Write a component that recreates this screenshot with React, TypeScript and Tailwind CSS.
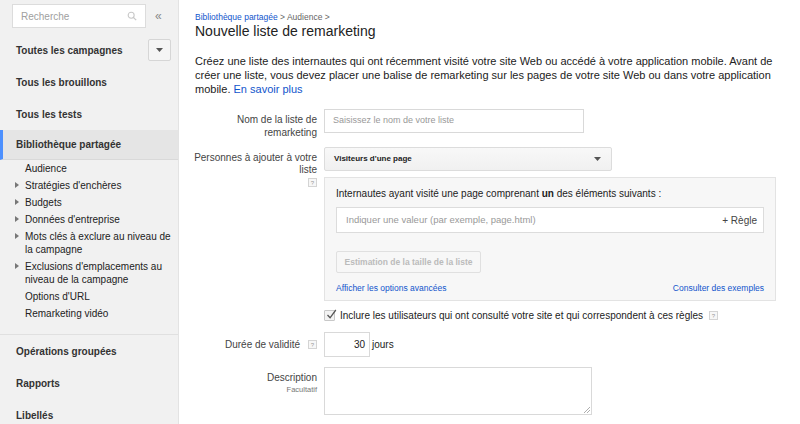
import React from "react";

const font = { fontFamily: '"Liberation Sans", Arial, sans-serif' };

const Help = () => (
  <span className="inline-flex h-[9px] w-[9px] items-center justify-center border border-[#d4d4d4] bg-[#f7f7f7] text-[6px] leading-none text-[#999]">
    ?
  </span>
);

const Caret = () => (
  <svg width="7" height="4" viewBox="0 0 7 4">
    <path d="M0 0h7L3.5 4z" fill="#555" />
  </svg>
);

const SubArrow = () => (
  <svg width="4" height="6" viewBox="0 0 4 6" className="mt-[3px] shrink-0">
    <path d="M0 0l4 3-4 3z" fill="#777" />
  </svg>
);

const Sidebar = () => {
  const subItems: { label: string; arrow: boolean }[] = [
    { label: "Audience", arrow: false },
    { label: "Stratégies d'enchères", arrow: true },
    { label: "Budgets", arrow: true },
    { label: "Données d'entreprise", arrow: true },
    { label: "Mots clés à exclure au niveau de la campagne", arrow: true },
    { label: "Exclusions d'emplacements au niveau de la campagne", arrow: true },
    { label: "Options d'URL", arrow: false },
    { label: "Remarketing vidéo", arrow: false },
  ];

  return (
    <aside className="w-[179px] shrink-0 border-r border-[#e3e3e3] bg-[#f1f1f1] text-[#333]">
      {/* search */}
      <div className="flex h-[34px] items-start pl-3 pt-[4px]">
        <div className="flex h-[24px] w-[134px] items-center justify-between border border-[#dcdcdc] bg-white pl-[8px] pr-[8px]">
          <span className="text-[10px] text-[#a0a0a0]">Recherche</span>
          <svg width="10" height="10" viewBox="0 0 12 12">
            <circle cx="5" cy="5" r="3.6" fill="none" stroke="#c8c8c8" strokeWidth="1.3" />
            <path d="M7.6 7.6L11 11" stroke="#c8c8c8" strokeWidth="1.5" />
          </svg>
        </div>
        <span className="ml-[9px] mt-[3px] text-[12px] text-[#888]">«</span>
      </div>

      <div className="flex h-[32px] items-center justify-between pl-4 pr-[7px]">
        <span className="text-[10px] font-bold">Toutes les campagnes</span>
        <div className="flex h-[22px] w-[23px] items-center justify-center rounded-[2px] border border-[#d6d6d6] bg-[#f5f5f5]">
          <Caret />
        </div>
      </div>
      <div className="flex h-[32px] items-center pl-4 text-[10px] font-bold">Tous les brouillons</div>
      <div className="flex h-[32px] items-center pl-4 text-[10px] font-bold">Tous les tests</div>

      <div className="flex h-[30px] items-center border-b border-[#d9d9d9] border-l-[3px] border-l-[#4d90fe] bg-[#e5e5e5] pl-[13px] text-[10px] font-bold">
        Bibliothèque partagée
      </div>

      <ul className="pb-[12px] text-[10px] leading-[13px] text-[#222]">
        {subItems.map((item) => (
          <li key={item.label} className="flex gap-[6px] py-[2px] pl-[15px] pr-[3px]">
            <span className="w-[4px] shrink-0">{item.arrow && <SubArrow />}</span>
            <span>{item.label}</span>
          </li>
        ))}
      </ul>

      <div className="border-t border-[#e0e0e0]">
        <div className="flex h-[32px] items-center pl-4 text-[10px] font-bold">Opérations groupées</div>
        <div className="flex h-[32px] items-center pl-4 text-[10px] font-bold">Rapports</div>
        <div className="flex h-[32px] items-center pl-4 text-[10px] font-bold">Libellés</div>
      </div>
    </aside>
  );
};

const Label = ({ children }: { children: React.ReactNode }) => (
  <div className="w-[128px] shrink-0 text-right text-[10px] leading-[13px] text-[#444]">{children}</div>
);

const Main = () => (
  <main className="min-w-0 flex-1 bg-white pl-4 pt-[12px] text-[#222]">
    <div className="text-[8.5px] leading-[11px] text-[#666]">
      <span className="text-[#1155cc]">Bibliothèque partagée</span> &gt; Audience &gt;
    </div>
    <h1 className="text-[14px] leading-[17px] text-[#222]">Nouvelle liste de remarketing</h1>

    <p className="mt-[14px] w-[590px] text-[11px] leading-[14px] text-[#222]">
      Créez une liste des internautes qui ont récemment visité votre site Web ou accédé à votre application mobile. Avant de
      créer une liste, vous devez placer une balise de remarketing sur les pages de votre site Web ou dans votre application
      mobile. <a className="text-[#1155cc]">En savoir plus</a>
    </p>

    <div className="-ml-[6px] mt-[13px] flex flex-col">
      {/* name */}
      <div className="flex gap-[7px]">
        <Label>
          <div className="pt-[4px]">
            Nom de la liste de
            <br />
            remarketing
          </div>
        </Label>
        <div className="flex h-[24px] w-[260px] items-center border border-[#d9d9d9] px-[8px] text-[9px] text-[#999]">
          Saisissez le nom de votre liste
        </div>
      </div>

      {/* people */}
      <div className="mt-[8px] flex gap-[7px]">
        <Label>
          <div className="pt-[5px] leading-[12px]">
            Personnes à ajouter à votre
            <br />
            liste
          </div>
          <div className="mt-[2px] flex justify-end">
            <Help />
          </div>
        </Label>
        <div className="flex flex-col">
          <div className="flex h-[24px] w-[288px] items-center justify-between rounded-[2px] border border-[#dcdcdc] bg-gradient-to-b from-[#f8f8f8] to-[#f0f0f0] pl-[9px] pr-[10px]">
            <span className="text-[8px] font-bold text-[#222]">Visiteurs d'une page</span>
            <Caret />
          </div>
          <div className="mt-[6px] w-[452px] border border-[#e3e3e3] bg-[#f7f7f7] px-[11px] pb-[6px] pt-[9px]">
            <div className="text-[10px] leading-[13px] text-[#222]">
              Internautes ayant visité une page comprenant <b>un</b> des éléments suivants :
            </div>
            <div className="mt-[7px] flex h-[26px] items-center justify-between border border-[#dcdcdc] bg-white pl-[9px] pr-[6px]">
              <span className="text-[9.5px] text-[#999]">Indiquer une valeur (par exemple, page.html)</span>
              <span className="text-[10px] text-[#444]">+ Règle</span>
            </div>
            <div className="mt-[18px] flex h-[22px] w-[145px] items-center justify-center rounded-[2px] border border-[#e0e0e0] bg-[#f7f7f7] text-[8.5px] font-bold text-[#bbb]">
              Estimation de la taille de la liste
            </div>
            <div className="mt-[9px] flex justify-between text-[8.5px] leading-[12px] text-[#1155cc]">
              <span>Afficher les options avancées</span>
              <span>Consulter des exemples</span>
            </div>
          </div>
          <div className="mt-[8px] flex items-center text-[10px] leading-[13px] text-[#222]">
            <span className="relative flex h-[11px] w-[11px] items-center justify-center rounded-[1px] border border-[#c8c8c8] bg-[#f3f3f3]">
              <svg width="11" height="11" viewBox="0 0 11 11" className="absolute -top-[2px] left-[1px]">
                <path d="M1.5 6l2.6 2.8L9.8 1" fill="none" stroke="#555" strokeWidth="1.3" />
              </svg>
            </span>
            <span className="ml-[5px]">Inclure les utilisateurs qui ont consulté votre site et qui correspondent à ces règles</span>
            <span className="ml-[6px] flex">
              <Help />
            </span>
          </div>
        </div>
      </div>

      {/* duration */}
      <div className="mt-[10px] flex items-center gap-[7px]">
        <Label>
          <div className="flex items-center justify-end gap-[8px]">
            <span>Durée de validité</span>
            <Help />
          </div>
        </Label>
        <div className="flex h-[25px] w-[46px] items-center justify-end border border-[#d9d9d9] pr-[4px] text-[10px] text-[#222]">
          30
        </div>
        <span className="-ml-[5px] text-[10px] text-[#222]">jours</span>
      </div>

      {/* description */}
      <div className="mt-[10px] flex gap-[7px]">
        <Label>
          <div className="pt-[4px]">Description</div>
          <div className="text-[7.5px] leading-[11px] text-[#777]">Facultatif</div>
        </Label>
        <div className="relative h-[48px] w-[268px] border border-[#d9d9d9]">
          <svg width="6" height="6" viewBox="0 0 6 6" className="absolute bottom-[1px] right-[1px]">
            <path d="M6 0L0 6M6 3L3 6" stroke="#999" strokeWidth="0.8" />
          </svg>
        </div>
      </div>
    </div>
  </main>
);

export default function App() {
  return (
    <div className="flex h-[424px] w-[800px] overflow-hidden" style={font}>
      <Sidebar />
      <Main />
    </div>
  );
}
